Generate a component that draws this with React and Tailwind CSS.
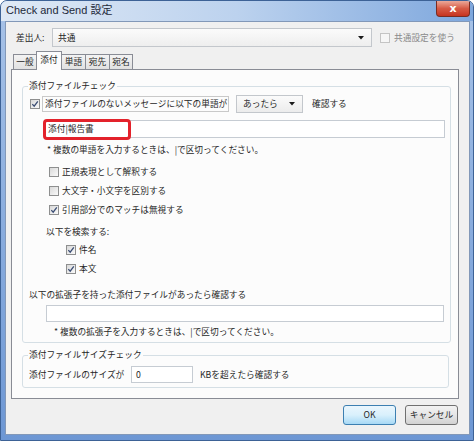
import React from "react";

const ui = "font-['Noto_Sans_CJK_JP',sans-serif] text-[8.7px] leading-[12px] text-[#262626]";

const Check = ({ checked, disabled }) => (
  <span
    className={`flex h-[10px] w-[10px] shrink-0 items-center justify-center border ${
      disabled
        ? "border-[#c4c4c4] bg-[#f6f6f6]"
        : "border-[#8e8f8f] bg-linear-to-br from-[#d9d9d9] to-[#fafafa]"
    }`}
  >
    {checked && (
      <svg width="8" height="8" viewBox="0 0 8 8">
        <path d="M1.3 4.1 L3.2 6.2 L6.8 1.4" fill="none" stroke="#3a4d74" strokeWidth="1.3" />
      </svg>
    )}
  </span>
);

const Arrow = () => (
  <svg width="6" height="4" viewBox="0 0 6 4" className="shrink-0">
    <path d="M0 0 H6 L3 3.5 Z" fill="#1b1b1b" />
  </svg>
);

const CheckRow = ({ checked, label, className }) => (
  <div className={`flex h-[19px] items-center gap-[3px] ${className}`}>
    <Check checked={checked} />
    <span>{label}</span>
  </div>
);

const Tab = ({ label, w, active }) =>
  active ? (
    <div
      className={`relative z-10 -mb-px -ml-px flex h-[19px] items-start justify-center border border-b-0 border-[#898c95] bg-[#fcfcfc] pt-[2px] ${w}`}
    >
      {label}
    </div>
  ) : (
    <div
      className={`-ml-px flex h-[15px] items-center justify-center border border-b-0 border-[#898c95] bg-linear-to-b from-[#f3f3f3] to-[#e1e1e1] first:ml-0 ${w}`}
    >
      {label}
    </div>
  );

export default function App() {
  return (
    <div className="flex h-[441px] w-[474px] flex-col overflow-hidden rounded-t-[7px] border border-[#3d6296] bg-linear-to-b from-[#a8c3e8] to-[#6d97d4]">
      {/* title bar */}
      <div className="flex h-[20px] shrink-0 items-start bg-linear-to-r from-[#dfe9f5] via-[#bcd2ee] to-[#7ea7dd]">
        <span className="pl-[5px] pt-[3px] font-['Liberation_Sans','Noto_Sans_CJK_JP',sans-serif] text-[11px] leading-[13px] text-[#1e2a3a]">
          Check and Send 設定
        </span>
        <div className="mr-[3px] ml-auto flex h-[16px] w-[34px] items-center justify-center rounded-b-[4px] border border-t-0 border-[#7a2c22] bg-linear-to-b from-[#eaa899] via-[#d65a45] to-[#c6331f]">
          <span className="font-['DejaVu_Sans',sans-serif] text-[11px] leading-none font-bold text-white">x</span>
        </div>
      </div>

      {/* client area */}
      <div className={`mr-[3px] mb-[5px] ml-[4px] flex flex-1 flex-col border border-[#8298b8] bg-[#f0f0f0] ${ui}`}>
        {/* sender row */}
        <div className="flex items-center pt-[6px] pl-[10px]">
          <span className="w-[36px]">差出人:</span>
          <div className="flex h-[19px] w-[320px] items-center justify-between border border-[#c3c7cc] bg-linear-to-b from-[#fbfbfb] to-[#eeeeee] pr-[7px] pl-[5px]">
            <span>共通</span>
            <Arrow />
          </div>
          <div className="ml-[8px] flex items-center gap-[4px] text-[#8a8a8a]">
            <Check disabled />
            <span>共通設定を使う</span>
          </div>
        </div>

        {/* tabs */}
        <div className="mt-[4px] ml-[7px] flex h-[18px] items-end">
          <Tab label="一般" w="w-[24px]" />
          <Tab label="添付" w="w-[26px]" active />
          <Tab label="単語" w="w-[25px]" />
          <Tab label="宛先" w="w-[25px]" />
          <Tab label="宛名" w="w-[24px]" />
        </div>

        {/* tab panel */}
        <div className="ml-[5px] flex h-[330px] w-[448px] flex-col border border-[#898c95] bg-[#fcfcfc]">
          <fieldset className="mt-[10px] ml-[10px] w-[427px] rounded-[3px] border border-[#d5dfe5] px-[5px] pb-[4px]">
            <legend className="px-[1px]">添付ファイルチェック</legend>

            <div className="mt-[3px] ml-[2px] flex h-[18px] items-center">
              <Check checked />
              <span className="ml-[2px] flex h-[16px] w-[187px] items-center border border-[#c9c9c9] pl-[2px]">
                添付ファイルのないメッセージに以下の単語が
              </span>
              <div className="ml-[7px] flex h-[18px] w-[67px] items-center justify-between border border-[#c3c7cc] bg-linear-to-b from-[#fbfbfb] to-[#ececec] pr-[7px] pl-[6px]">
                <span>あったら</span>
                <Arrow />
              </div>
              <span className="ml-[9px]">確認する</span>
            </div>

            <div className="relative mt-[7px] ml-[16px] flex h-[18px] w-[401px] items-center border border-[#c6ccd3] bg-white pl-[3px]">
              <span>添付|報告書</span>
              <div className="absolute -top-[2px] -left-[2px] h-[21px] w-[88px] rounded-[4px] border-[3px] border-[#e3222b]" />
            </div>

            <div className="mt-[6px] ml-[19px]">* 複数の単語を入力するときは、|で区切ってください。</div>

            <CheckRow className="mt-[6px] ml-[21px]" label="正規表現として解釈する" />
            <CheckRow className="ml-[21px]" label="大文字・小文字を区別する" />
            <CheckRow className="ml-[21px]" checked label="引用部分でのマッチは無視する" />

            <div className="mt-[7px] ml-[18px]">以下を検索する:</div>
            <CheckRow className="mt-[2px] ml-[38px]" checked label="件名" />
            <CheckRow className="ml-[38px]" checked label="本文" />

            <div className="mt-[11px] ml-[1px]">以下の拡張子を持った添付ファイルがあったら確認する</div>
            <div className="mt-[4px] ml-[18px] h-[17px] w-[398px] border border-[#c6ccd3] bg-white" />
            <div className="mt-[4px] ml-[26px]">* 複数の拡張子を入力するときは、|で区切ってください。</div>
          </fieldset>

          <fieldset className="mt-[6px] ml-[10px] w-[427px] rounded-[3px] border border-[#d5dfe5] px-[5px] pb-[4px]">
            <legend className="px-[1px]">添付ファイルサイズチェック</legend>
            <div className="mt-[5px] ml-[1px] flex h-[17px] items-center">
              <span className="w-[102px]">添付ファイルのサイズが</span>
              <div className="flex h-[17px] w-[62px] items-center border border-[#c6ccd3] bg-white pl-[4px]">0</div>
              <span className="ml-[7px]">KBを超えたら確認する</span>
            </div>
          </fieldset>
        </div>

        {/* buttons */}
        <div className="mt-[6px] flex justify-end gap-[9px] pr-[11px]">
          <button className="flex h-[20px] w-[53px] items-center justify-center rounded-[3px] border border-[#3c7fb1] bg-linear-to-b from-[#eaf6fd] via-[#d9f0fc] to-[#a7d9f5]">
            OK
          </button>
          <button className="flex h-[20px] w-[53px] items-center justify-center rounded-[3px] border border-[#707070] bg-linear-to-b from-[#f2f2f2] via-[#e6e6e6] to-[#d2d2d2]">
            キャンセル
          </button>
        </div>
      </div>
    </div>
  );
}
